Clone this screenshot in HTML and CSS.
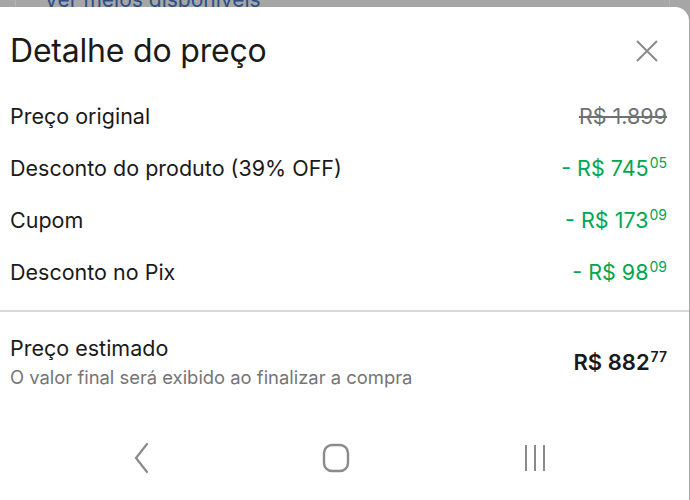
FILE: index.html
```html
<!DOCTYPE html>
<html lang="pt-BR">
<head>
    <meta charset="UTF-8">
    <meta name="viewport" content="width=device-width, initial-scale=1.0">
    <title>Detalhe do preço</title>
    <link rel="stylesheet" href="styles.css">
</head>
<body>

    <div class="backdrop">
        <div class="behind-card">
            <span class="behind-link">Ver meios disponíveis</span>
        </div>
    </div>

    <div class="sheet">
        <div class="sheet-header">
            <h2 class="sheet-title">Detalhe do preço</h2>
            <button class="close-btn" aria-label="Fechar">
                <svg width="24" height="24" viewBox="0 0 24 24">
                    <path d="M2 2 L22 22 M22 2 L2 22" stroke="#8a8a8a" stroke-width="2" fill="none"/>
                </svg>
            </button>
        </div>

        <div class="price-rows">
            <div class="price-row">
                <span class="label">Preço original</span>
                <span class="value original">R$ 1.899</span>
            </div>
            <div class="price-row">
                <span class="label">Desconto do produto (39% OFF)</span>
                <span class="value discount">- R$ 745<sup>05</sup></span>
            </div>
            <div class="price-row">
                <span class="label">Cupom</span>
                <span class="value discount">- R$ 173<sup>09</sup></span>
            </div>
            <div class="price-row">
                <span class="label">Desconto no Pix</span>
                <span class="value discount">- R$ 98<sup>09</sup></span>
            </div>
        </div>

        <div class="total">
            <div class="total-text">
                <span class="label">Preço estimado</span>
                <span class="note">O valor final será exibido ao finalizar a compra</span>
            </div>
            <span class="value final">R$ 882<sup>77</sup></span>
        </div>

        <nav class="nav-bar">
            <svg width="20" height="32" viewBox="0 0 20 32">
                <path d="M15 2 L4 16 L15 30" stroke="#8a8a8a" stroke-width="2.2" fill="none" stroke-linecap="round"/>
            </svg>
            <svg width="30" height="30" viewBox="0 0 30 30">
                <rect x="2" y="2" width="24" height="26" rx="8" stroke="#8a8a8a" stroke-width="2.4" fill="none"/>
            </svg>
            <svg width="28" height="30" viewBox="0 0 28 30">
                <path d="M4 2 V28 M13 2 V28 M22 2 V28" stroke="#8a8a8a" stroke-width="2" fill="none"/>
            </svg>
        </nav>
    </div>

</body>
</html>
```

FILE: styles.css
```css
body {
    margin: 0;
    font-family: Inter, "Open Sans", sans-serif;
    background-color: #a6a6a6;
    overflow: hidden;
    height: 500px;
}
.backdrop {
    height: 7px;
    overflow: hidden;
    padding: 0 20px 0 15px;
}
.behind-card {
    height: 30px;
    margin-top: -10px;
    border-left: 1px solid #b4b4b4;
    border-right: 1px solid #b4b4b4;
    padding-left: 28px;
}
.behind-link {
    color: #2d4e8a;
    font-size: 21px;
    line-height: 20px;
}
.sheet {
    background-color: #fff;
    border-top-right-radius: 14px;
    height: 493px;
    margin-right: 1px;
}
.sheet-header {
    display: flex;
    justify-content: space-between;
    align-items: center;
    padding: 22px 30px 0 10px;
}
.sheet-title {
    margin: 0;
    font-size: 32px;
    font-weight: 400;
    color: #1a1a1a;
    line-height: 44px;
    letter-spacing: -0.2px;
}
.close-btn {
    background: none;
    border: none;
    padding: 0;
    width: 24px;
    height: 24px;
}
.price-rows {
    padding: 17px 22px 12px 10px;
    border-bottom: 2px solid #d9d9d9;
}
.price-row {
    display: flex;
    justify-content: space-between;
    align-items: center;
    height: 52px;
}
.label {
    font-size: 21.5px;
    color: #1a1a1a;
}
.value {
    font-size: 21.5px;
}
.value sup {
    font-size: 14px;
    vertical-align: top;
    position: relative;
    top: -1px;
    margin-left: 1px;
}
.original {
    color: #707070;
    text-decoration: line-through;
}
.discount {
    color: #00a650;
}
.total {
    display: flex;
    justify-content: space-between;
    align-items: center;
    padding: 23px 22px 0 10px;
}
.total-text {
    display: flex;
    flex-direction: column;
}
.note {
    font-size: 18.4px;
    color: #757575;
    margin-top: 5px;
}
.final {
    color: #1a1a1a;
    font-weight: 600;
    font-size: 22px;
}
.nav-bar {
    display: flex;
    justify-content: center;
    gap: 170px;
    align-items: center;
    margin-top: 54px;
    padding-right: 8px;
}
```
